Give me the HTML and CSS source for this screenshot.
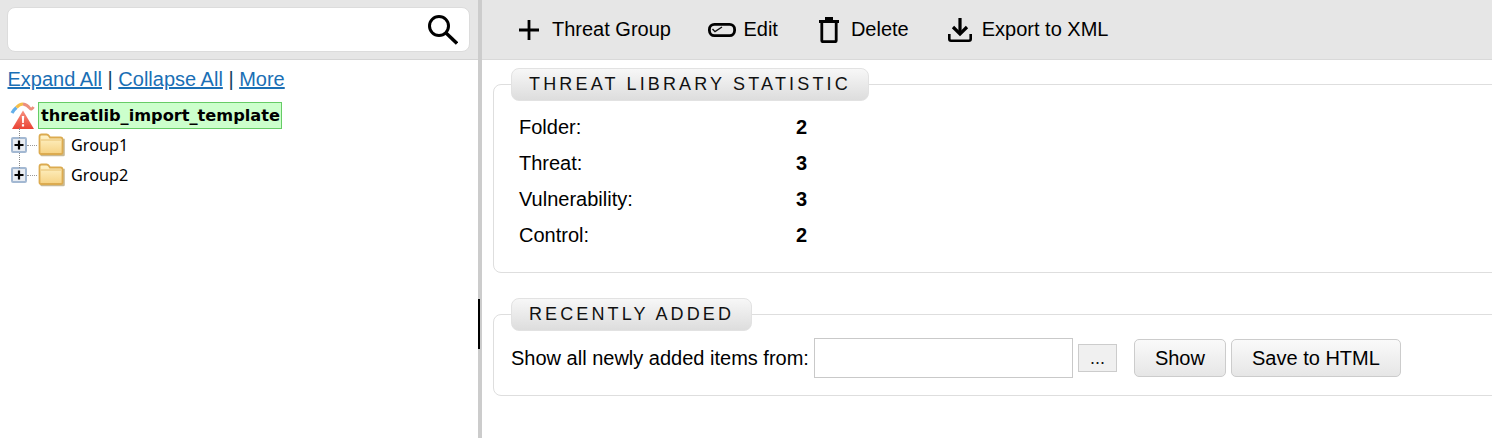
FILE: index.html
```html
<!DOCTYPE html>
<html lang="en">
<head>
<meta charset="utf-8">
<title>Threat Library</title>
<link rel="stylesheet" href="styles.css">
</head>
<body>
<div class="app">
  <aside class="left">
    <div class="searchbar">
      <div class="searchbox">
        <svg class="search-icon" width="30" height="30" viewBox="0 0 30 30"><circle cx="11" cy="11" r="9.500" fill="none" stroke="#000" stroke-width="3"/><path d="M17.500 17.500 L29 28.500" stroke="#000" stroke-width="3.400" fill="none"/></svg>
      </div>
    </div>
    <div class="links"><a href="#">Expand All</a> | <a href="#">Collapse All</a> | <a href="#">More</a></div>
    <div class="tree">
      <div class="root">
        <svg class="root-icon" width="26" height="27" viewBox="0 0 26 27">
          <defs><linearGradient id="tri" x1="0" y1="0" x2="0" y2="1"><stop offset="0" stop-color="#f7907e"/><stop offset="1" stop-color="#ea4436"/></linearGradient></defs>
          <path d="M2 11 Q3.500 8 6.500 5.500" fill="none" stroke="#63afea" stroke-width="3.200"/>
          <path d="M6.500 5.500 Q9.500 2 13 2" fill="none" stroke="#f5bf4a" stroke-width="3.200"/>
          <path d="M13 2 Q17 2.500 20 6.500 Q21.500 8 23.500 5" fill="none" stroke="#ec8f7c" stroke-width="2.800"/>
          <path d="M13 8.500 L24 27 H2 Z" fill="url(#tri)"/>
          <path d="M11.800 14 h2.400 l-.4 7 h-1.600 Z M11.900 22.200 h2.200 v2.300 h-2.200 Z" fill="#fff"/>
        </svg>
        <span class="root-label">threatlib_import_template</span>
      </div>
      <div class="node">
        <svg class="expander" width="16" height="16" viewBox="0 0 16 16"><rect x="1" y="1" width="14" height="14" rx="1" fill="#e8ecf2" stroke="#a3b8d2" stroke-width="2"/><path d="M3.500 8 h9 M8 3.500 v9" stroke="#000" stroke-width="2.200"/></svg>
        <span class="dots"></span>
        <svg class="folder" width="28" height="24" viewBox="0 0 28 24"><defs><linearGradient id="fg" x1="0" y1="0" x2="0" y2="1"><stop offset="0" stop-color="#fff5cc"/><stop offset="1" stop-color="#f6d283"/></linearGradient></defs><path d="M3 22.500 Q1.500 22.500 1.500 21 V5 H26 V21 Q26 22.500 24.500 22.500 Z" fill="#c9b993" transform="translate(.8 .8)"/><path d="M3 21 Q1.500 21 1.500 19.500 V3.500 Q1.500 1.500 3.500 1.500 H8.500 Q10 1.500 11 3 L12 4.500 H22.500 Q24.500 4.500 24.500 6.500 V19.500 Q24.500 21 23 21 Z" fill="url(#fg)" stroke="#dcab50" stroke-width="1.800"/><path d="M3 7 H23" stroke="#e6bf70" stroke-width="1"/></svg>
        <span class="node-label">Group1</span>
      </div>
      <div class="node">
        <svg class="expander" width="16" height="16" viewBox="0 0 16 16"><rect x="1" y="1" width="14" height="14" rx="1" fill="#e8ecf2" stroke="#a3b8d2" stroke-width="2"/><path d="M3.500 8 h9 M8 3.500 v9" stroke="#000" stroke-width="2.200"/></svg>
        <span class="dots"></span>
        <svg class="folder" width="28" height="24" viewBox="0 0 28 24"><path d="M3 22.500 Q1.500 22.500 1.500 21 V5 H26 V21 Q26 22.500 24.500 22.500 Z" fill="#c9b993" transform="translate(.8 .8)"/><path d="M3 21 Q1.500 21 1.500 19.500 V3.500 Q1.500 1.500 3.500 1.500 H8.500 Q10 1.500 11 3 L12 4.500 H22.500 Q24.500 4.500 24.500 6.500 V19.500 Q24.500 21 23 21 Z" fill="url(#fg)" stroke="#dcab50" stroke-width="1.800"/><path d="M3 7 H23" stroke="#e6bf70" stroke-width="1"/></svg>
        <span class="node-label">Group2</span>
      </div>
    </div>
  </aside>
  <div class="splitter"><span class="handle"></span></div>
  <main class="right">
    <nav class="toolbar">
      <button class="tool tool-add"><svg width="20" height="20" viewBox="0 0 20 20"><path d="M10 0 V20 M0 10 H20" stroke="#000" stroke-width="2.800"/></svg>Threat Group</button>
      <button class="tool tool-edit"><svg width="28" height="14" viewBox="0 0 28 14"><rect x="1.400" y="1.400" width="25.200" height="11.200" rx="5" fill="none" stroke="#000" stroke-width="2.800"/><path d="M4.500 6 L7 8.700 L14 4" fill="none" stroke="#111" stroke-width="1.400"/></svg>Edit</button>
      <button class="tool tool-delete"><svg width="20" height="26" viewBox="0 0 20 26"><path d="M0 4.500 H20 M6 1.500 H14" stroke="#000" stroke-width="2.800"/><path d="M2.800 6 V23.500 Q2.800 24.700 4 24.700 H16 Q17.200 24.700 17.200 23.500 V6" fill="none" stroke="#000" stroke-width="2.800"/></svg>Delete</button>
      <button class="tool tool-export"><svg width="24" height="24" viewBox="0 0 24 24"><path d="M12 0 V15" stroke="#000" stroke-width="3.200"/><path d="M5 9 L12 16 L19 9" fill="none" stroke="#000" stroke-width="3.200"/><path d="M1.300 16 V21 Q1.300 22.700 3 22.700 H21 Q22.700 22.700 22.700 21 V16" fill="none" stroke="#000" stroke-width="2.600"/></svg>Export to XML</button>
    </nav>
    <div class="content">
      <fieldset class="panel panel-stats">
        <legend>THREAT LIBRARY STATISTIC</legend>
        <dl class="stats">
          <dt>Folder:</dt><dd>2</dd>
          <dt>Threat:</dt><dd>3</dd>
          <dt>Vulnerability:</dt><dd>3</dd>
          <dt>Control:</dt><dd>2</dd>
        </dl>
      </fieldset>
      <fieldset class="panel panel-recent">
        <legend>RECENTLY ADDED</legend>
        <div class="recent-row">
          <label class="recent-label" for="from">Show all newly added items from:</label>
          <input id="from" class="date-input" type="text">
          <button class="btn-dots">...</button>
          <button class="btn btn-show">Show</button>
          <button class="btn btn-save">Save to HTML</button>
        </div>
      </fieldset>
    </div>
  </main>
</div>
</body>
</html>
```

FILE: styles.css
```css
* { box-sizing: border-box; }
html, body { margin: 0; height: 100%; background: #fff; }
body { font-family: "Liberation Sans", Arial, sans-serif; font-size: 20px; color: #000; overflow: hidden; }
.app { display: flex; height: 438px; }

.left { width: 478px; flex: none; }
.searchbar { height: 60px; padding: 7px 8px 0 7px; background: #e6e6e6; border-bottom: 1px solid #d4d4d4; }
.searchbox { height: 45px; background: #fff; border: 1px solid #dcdcdc; border-radius: 8px; display: flex; justify-content: flex-end; align-items: center; padding-right: 11px; }
.links { padding: 8px 0 0 7.500px; line-height: 23px; color: #14405f; }
.links a { color: #1a6fb5; }

.tree { padding: 10px 0 0 10px; }
.root { display: flex; align-items: center; height: 28px; }
.root-icon { flex: none; margin-right: 2px; }
.root-label { font-family: "DejaVu Sans", Verdana, sans-serif; font-weight: 700; font-size: 16.200px; line-height: 25px; height: 27px; padding: 0 1px 0 2px; background: #ccffcc; border: 1px solid #66cc66; }
.node { position: relative; display: flex; align-items: center; height: 30px; padding: 2px 0 0 1px; }
.node::before { content: ""; position: absolute; left: 9px; top: -1px; height: 10px; border-left: 1px dotted #888; }
.node + .node::before { top: -6px; height: 15px; }
.expander { flex: none; }
.dots { width: 10px; border-top: 1px dotted #999; flex: none; }
.folder { flex: none; margin-left: 1px; }
.node-label { font-family: "Noto Sans", Tahoma, sans-serif; font-size: 16.200px; margin-left: 5px; }

.splitter { width: 4px; flex: none; background: #cccccc; display: flex; flex-direction: column; padding-top: 299px; }
.handle { display: block; width: 2px; height: 50px; background: #000; }

.right { flex: 1; min-width: 0; overflow: hidden; }
.toolbar { height: 60px; background: #e6e6e6; border-bottom: 1px solid #d9d9d9; display: flex; align-items: center; padding-left: 37px; }
.tool { display: flex; align-items: center; background: none; border: 0; padding: 0; font: inherit; color: #000; }
.tool-add { gap: 13px; }
.tool-edit { margin-left: 37px; gap: 7.500px; }
.tool-delete { margin-left: 41.500px; gap: 11.500px; }
.tool-export { margin-left: 39.500px; gap: 9.500px; }

.content { padding: 8px 0 0 11px; }
.panel { margin: 0 -12px 0 0; padding: 8px 0 0 17px; border: 1px solid #dedede; border-radius: 8px; min-width: 0; }
.panel legend { margin-left: 0; padding: 0 17px; height: 33px; line-height: 31px; font-size: 18px; letter-spacing: 3.120px; color: #111; background: linear-gradient(#f7f7f7, #dddddd); border: 1px solid #e2e2e2; border-radius: 8px; }
.panel-stats { height: 205px; }
.panel-stats legend { letter-spacing: 3.160px; }
.panel-recent { height: 98px; margin-top: 25px; padding-top: 6px; }

.stats { display: grid; grid-template-columns: 277px 1fr; grid-auto-rows: 36px; align-items: center; margin: 0; padding: 0 0 0 8px; }
.stats dt { margin: 0; }
.stats dd { margin: 0; font-weight: 700; }

.recent-row { display: flex; align-items: center; height: 42px; }
.recent-label { margin-right: 5px; }
.date-input { width: 259px; height: 40px; border: 1px solid #c9c9c9; background: #fff; padding: 0 6px; font: inherit; }
.btn-dots { width: 39px; height: 28px; margin-left: 5px; border: 1px solid #cccccc; background: #f0f0f0; font: 18px "Liberation Sans", Arial, sans-serif; color: #111; padding: 0; }
.btn { height: 38px; border: 1px solid #cccccc; border-radius: 5px; background: linear-gradient(#fafafa, #e6e6e6); font: inherit; color: #000; padding: 0; }
.btn-show { width: 92px; margin-left: 17px; }
.btn-save { width: 170px; margin-left: 5px; }
```
